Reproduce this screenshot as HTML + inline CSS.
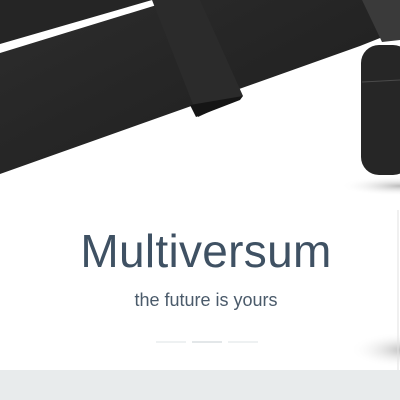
<!DOCTYPE html>
<html><head><style>
html,body{margin:0;padding:0;width:400px;height:400px;overflow:hidden;background:#fff;position:relative;font-family:"Liberation Sans",sans-serif}
svg{position:absolute;left:0;top:0}
.t{position:absolute;left:0;width:412px;text-align:center;color:#3f5163}
.h{top:224px;font-size:46px;letter-spacing:0.3px;font-weight:300}
.s{top:290px;font-size:18px;color:#4a5a6a}
.bar{position:absolute;top:341px;height:2px;width:30px;background:#eef1f2}
.foot{position:absolute;left:0;top:370px;width:400px;height:30px;background:#e8ebec}
</style></head><body>
<svg width="400" height="400" viewBox="0 0 400 400">
<defs>
<linearGradient id="g1" x1="0" y1="0" x2="1" y2="1"><stop offset="0" stop-color="#2e2e2e"/><stop offset="1" stop-color="#1d1d1d"/></linearGradient>
<radialGradient id="sh" cx="0.5" cy="0.5" r="0.5"><stop offset="0" stop-color="#777" stop-opacity="0.5"/><stop offset="1" stop-color="#fff" stop-opacity="0"/></radialGradient>
</defs>
<ellipse cx="400" cy="186" rx="60" ry="10" fill="url(#sh)"/>
<ellipse cx="405" cy="350" rx="55" ry="18" fill="url(#sh)"/>
<line x1="398" y1="210" x2="398" y2="370" stroke="#e2e2e2" stroke-width="1"/>
<polygon points="0,0 152,0 0,44" fill="#252525"/>
<polygon points="0,53 160,4 400,-40 400,30 360,46 0,174" fill="url(#g1)"/>
<polygon points="362,0 400,0 400,40 382,42" fill="#3a3a3a"/>
<rect x="361" y="45" width="50" height="130" rx="18" fill="#262626"/>
<line x1="362" y1="82" x2="400" y2="80" stroke="#4a4a4a" stroke-width="1"/>
<polygon points="152,0 200,0 243,96 198,117" fill="#2b2b2b"/>
<polygon points="190,105 243,96 240,100 196,117" fill="#151515"/>
</svg>
<div class="t h">Multiversum</div>
<div class="t s">the future is yours</div>
<div class="bar" style="left:156px"></div>
<div class="bar" style="left:192px;background:#e3e7e9"></div>
<div class="bar" style="left:228px"></div>
<div class="foot"></div>
</body></html>
